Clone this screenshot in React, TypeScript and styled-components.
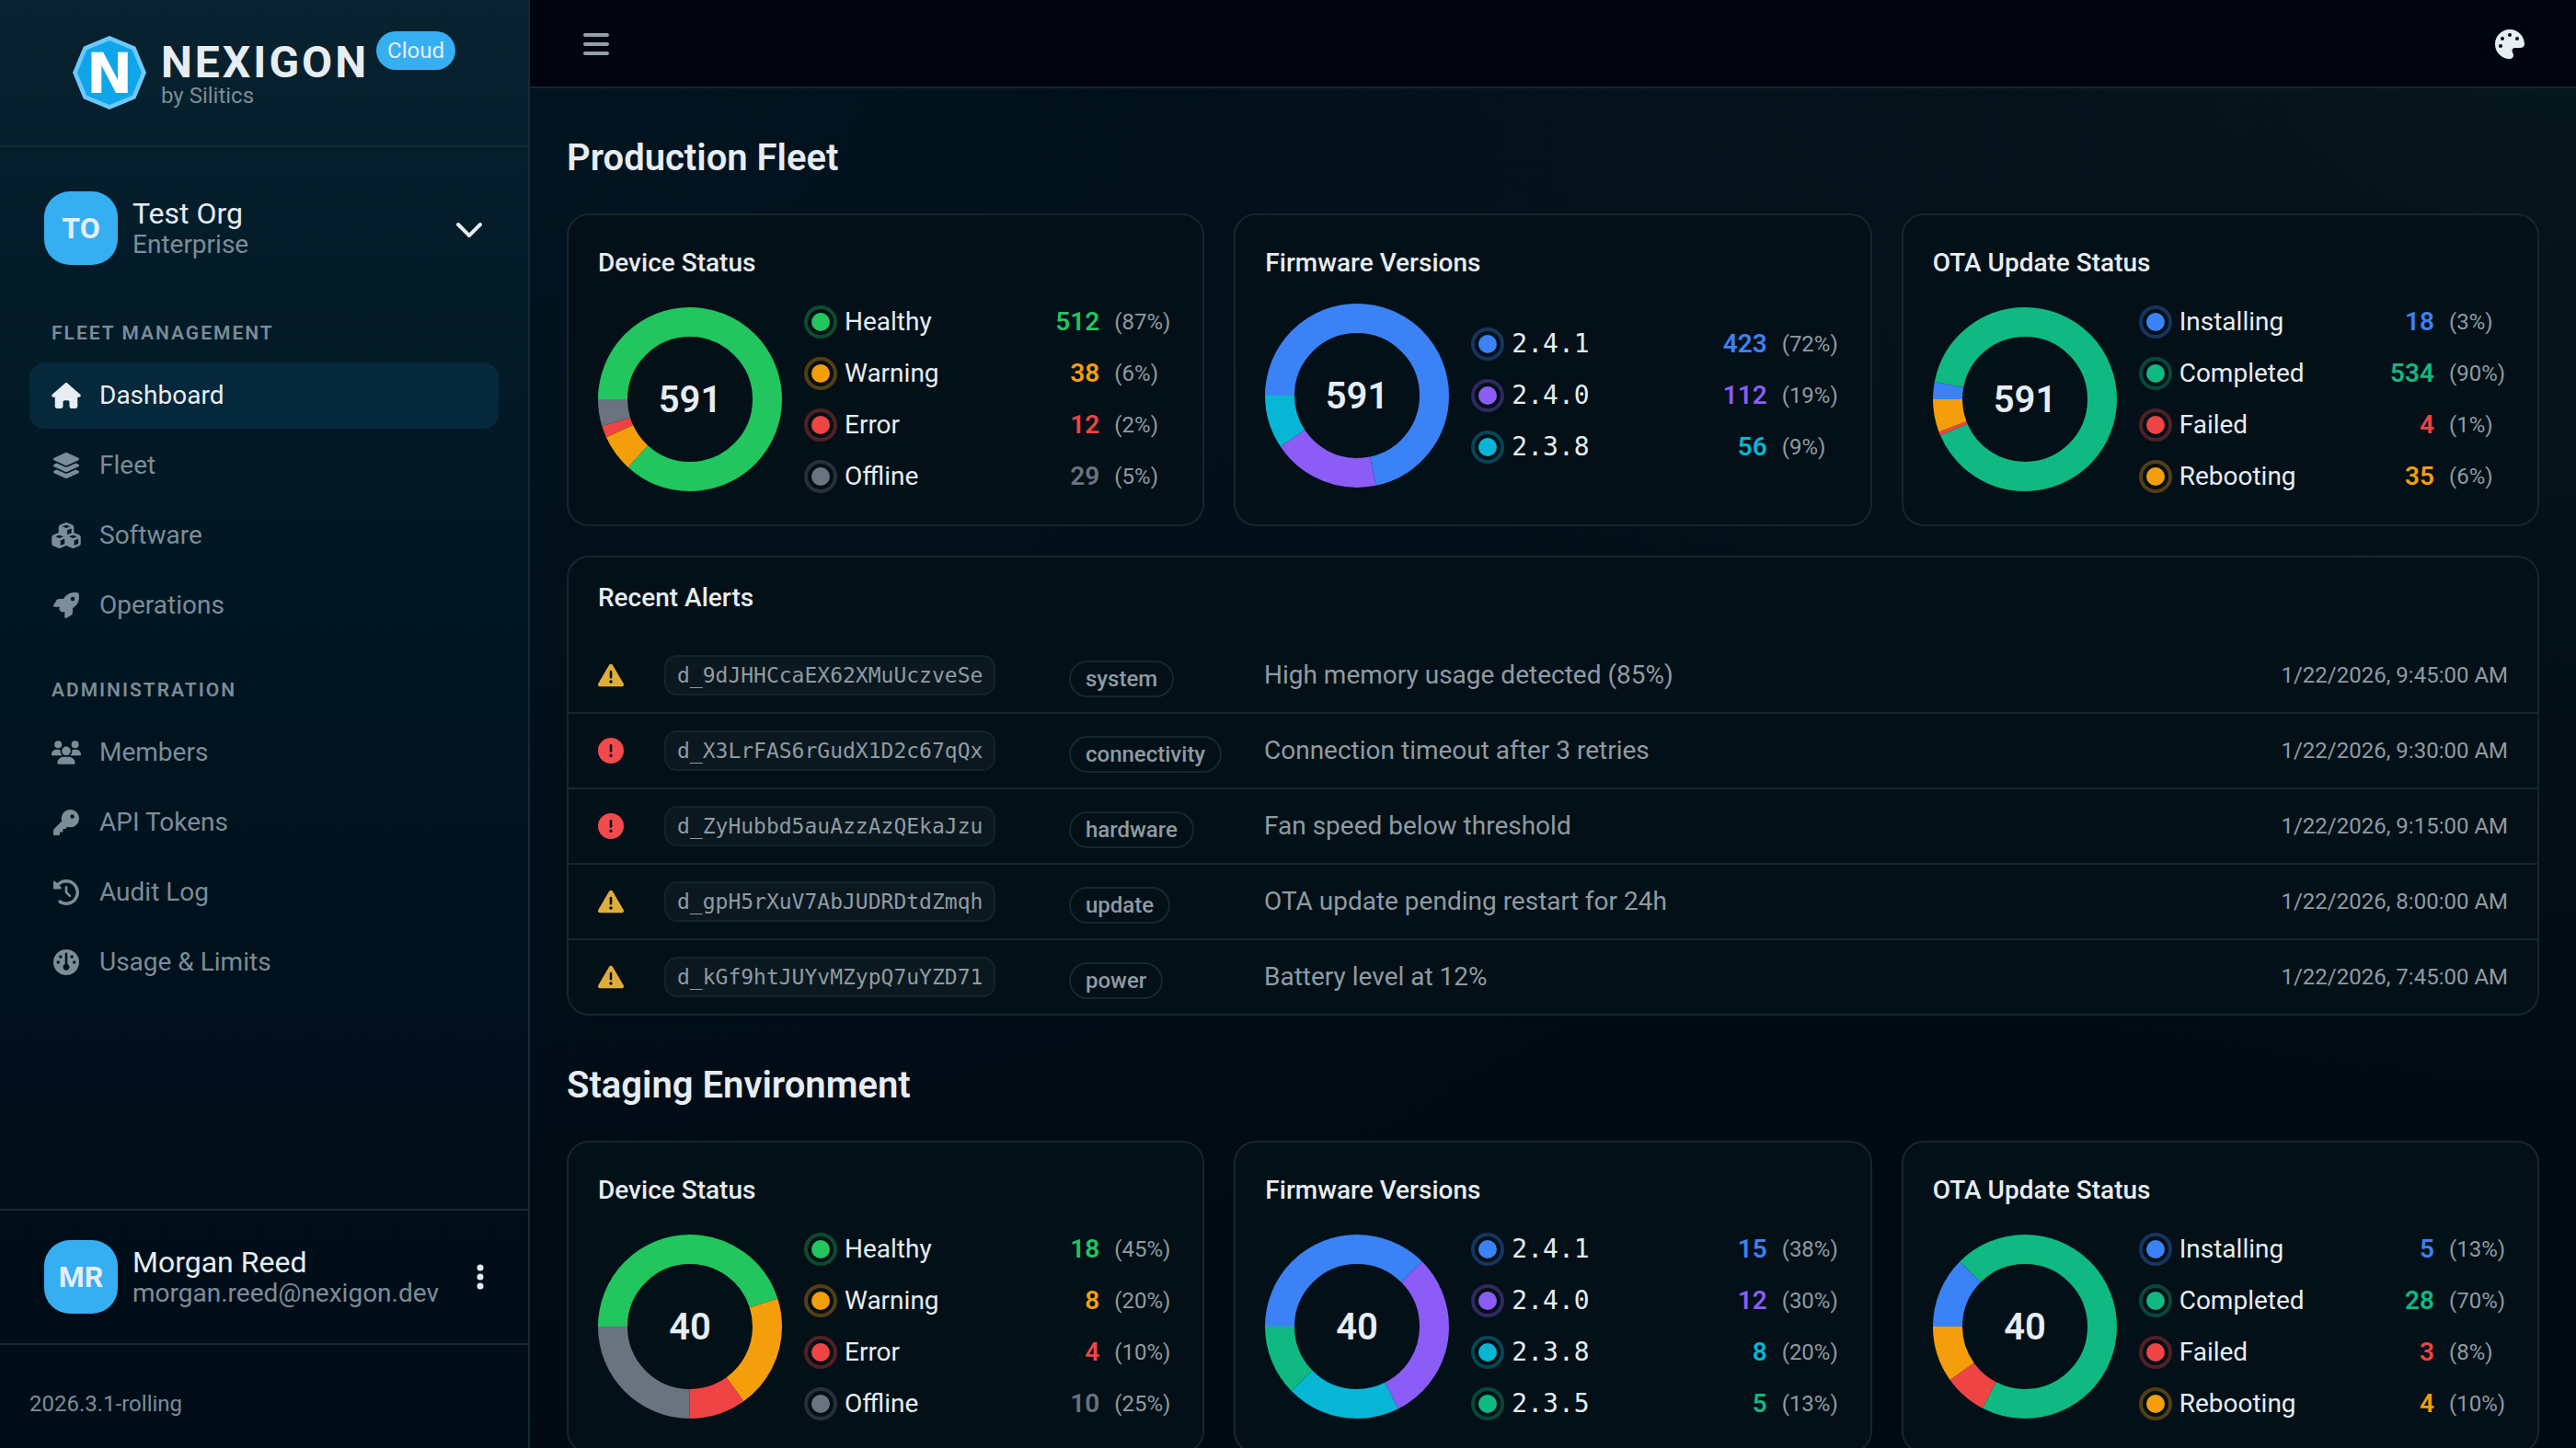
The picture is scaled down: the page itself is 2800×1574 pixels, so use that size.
import React from "react";
import styled, {createGlobalStyle, css} from "styled-components";
import {
    FaBars,
    FaChevronDown,
    FaCircleExclamation,
    FaClockRotateLeft,
    FaCubes,
    FaEllipsisVertical,
    FaGauge,
    FaHouse,
    FaKey,
    FaLayerGroup,
    FaPalette,
    FaRocket,
    FaTriangleExclamation,
    FaUsers
} from "react-icons/fa6";

const SANS = `Roboto, "Liberation Sans", sans-serif`;
const MONO = `"DejaVu Sans Mono", "Liberation Mono", monospace`;

const TEXT = "#e6edf3";
const MUTED = "#8f9ba3";
const FAINT = "#7b8d98";
const LINE = "#17262d";
const SIDE_LINE = "#132a36";
const ACCENT = "#36aff2";

const GlobalStyle = createGlobalStyle`
  * {
    box-sizing: border-box;
  }

  body {
    margin: 0;
    background: #010a13;
    color: ${TEXT};
    font-family: ${SANS};
    font-size: 28px;
    line-height: 40px;
  }

  button {
    padding: 0;
    border: 0;
    background: none;
    color: inherit;
    font: inherit;
    cursor: pointer;
  }
`;

const Layout = styled.div`
  display: grid;
  grid-template-columns: 576px 1fr;
  height: 100vh;
  overflow: hidden;
  background:
    radial-gradient(ellipse 60% 80% at 100% 0, rgba(10, 32, 38, 0.6), transparent),
    radial-gradient(ellipse 70% 100% at 20% 0, rgba(0, 28, 42, 0.6), transparent),
    #010a13;
`;

const Sidebar = styled.aside`
  display: flex;
  flex-direction: column;
  border-right: 2px solid ${SIDE_LINE};
  background: linear-gradient(180deg, #09222f 0%, #041c29 18%, #001521 45%, #000f1b 75%, #000c17 100%);
`;

const Brand = styled.a`
  display: flex;
  justify-content: center;
  align-items: center;
  gap: 16px;
  height: 160px;
  border-bottom: 2px solid ${SIDE_LINE};
  color: inherit;
  text-decoration: none;
`;

const BrandText = styled.span`
  display: flex;
  flex-direction: column;
  padding-top: 10px;

  small {
    color: ${FAINT};
    font-size: 24px;
    line-height: 32px;
  }
`;

const BrandName = styled.span`
  font-size: 48px;
  font-weight: 700;
  line-height: 40px;
  letter-spacing: 3px;
`;

const CloudBadge = styled.span`
  align-self: flex-start;
  margin: 34px 0 0 -8px;
  padding: 0 12px;
  border-radius: 21px;
  background: ${ACCENT};
  font-size: 24px;
  line-height: 42px;
`;

const Account = styled.button`
  display: flex;
  align-items: center;
  gap: 16px;
  width: 100%;
  padding: 32px 48px;
  text-align: left;

  svg {
    width: 8px;
    height: 32px;
    margin-left: auto;
  }
`;

const OrgSwitcher = styled(Account)`
  padding: 48px 48px 18px;

  svg {
    width: 32px;
  }
`;

const Avatar = styled.span`
  display: flex;
  flex-shrink: 0;
  justify-content: center;
  align-items: center;
  width: 80px;
  height: 80px;
  border-radius: 28px;
  background: ${ACCENT};
  font-size: 32px;
  font-weight: 700;
`;

const AccountName = styled.span`
  display: flex;
  flex-direction: column;
  padding-top: 2px;
  font-size: 32px;
  line-height: 34px;

  small {
    color: ${FAINT};
    font-size: 28px;
    line-height: 34px;
  }
`;

const NavGroup = styled.nav`
  display: flex;
  flex-direction: column;
  gap: 4px;
  padding: 0 32px;
`;

const NavTitle = styled.h2`
  margin: 0;
  padding: 40px 24px 12px;
  color: ${FAINT};
  font-size: 21px;
  font-weight: 600;
  line-height: 32px;
  letter-spacing: 2px;
`;

const NavLink = styled.a<{ $active?: boolean }>`
  display: flex;
  align-items: center;
  gap: 20px;
  height: 72px;
  padding: 0 24px;
  border-radius: 16px;
  color: ${({$active}) => $active ? TEXT : FAINT};
  text-decoration: none;
  ${({$active}) => $active && css`background: #05283b;`}

  svg {
    width: 32px;
    height: 28px;
  }
`;

const SidebarFooter = styled.div`
  margin-top: auto;
`;

const UserPanel = styled.div`
  border-top: 2px solid ${SIDE_LINE};
  border-bottom: 2px solid ${SIDE_LINE};
`;

const Version = styled.div`
  padding: 48px 32px 32px;
  color: ${FAINT};
  font-size: 24px;
  line-height: 32px;
`;

const Content = styled.div`
  display: flex;
  flex-direction: column;
  min-width: 0;
  min-height: 0;
`;

const TopBar = styled.header`
  display: flex;
  flex-shrink: 0;
  justify-content: space-between;
  align-items: center;
  height: 96px;
  padding: 2px 56px 0;
  border-bottom: 2px solid ${LINE};
  background: #00050f;
`;

const IconButton = styled.button<{ $dim?: boolean }>`
  display: flex;
  color: ${({$dim}) => $dim ? "#93a0a9" : TEXT};

  svg {
    width: 32px;
    height: 32px;
  }
`;

const Main = styled.main`
  flex: 1;
  padding: 0 40px 48px;
  overflow-y: auto;
  scrollbar-width: none;
`;

const SectionTitle = styled.h1`
  margin: 48px 0 32px;
  font-size: 40px;
  font-weight: 600;
  line-height: 56px;
`;

const CardGrid = styled.div`
  display: grid;
  grid-template-columns: repeat(3, minmax(0, 1fr));
  gap: 32px;
`;

const Card = styled.section`
  border: 2px solid ${LINE};
  border-radius: 24px;
  background: #031017;
`;

const StatCard = styled(Card)`
  padding: 32px;
`;

const CardTitle = styled.h3`
  margin: 0;
  font-size: 28px;
  font-weight: 500;
  line-height: 40px;
`;

const CardBody = styled.div`
  display: flex;
  align-items: center;
  gap: 24px;
  margin-top: 24px;
`;

const Chart = styled.svg`
  flex-shrink: 0;
  width: 200px;
  height: 200px;

  text {
    fill: ${TEXT};
    font-size: 40px;
    font-weight: 600;
  }
`;

const Legend = styled.ul`
  display: flex;
  flex: 1;
  flex-direction: column;
  gap: 16px;
  margin: 0;
  padding: 0;
  list-style: none;
`;

const LegendRow = styled.li`
  display: grid;
  grid-template-columns: 36px 1fr auto 64px;
  align-items: center;
  height: 40px;
`;

const LegendLabel = styled.span<{ $mono?: boolean }>`
  padding-left: 8px;
  font-family: ${({$mono}) => $mono ? MONO : "inherit"};
`;

const LegendValue = styled.strong<{ $color: string }>`
  padding-right: 16px;
  color: ${({$color}) => $color};
  font-weight: 600;
`;

const LegendPercent = styled.span`
  color: ${MUTED};
  font-size: 24px;
`;

const AlertsCard = styled(Card)`
  margin-top: 32px;
`;

const AlertsTitle = styled(CardTitle)`
  padding: 24px 32px;
`;

const AlertsTable = styled.table`
  width: 100%;
  border-collapse: separate;
  border-spacing: 0;
  table-layout: fixed;
  color: ${MUTED};
`;

const AlertCell = styled.td<{ $width?: number }>`
  width: ${({$width}) => $width ? `${$width}px` : "auto"};
  height: 82px;
  padding: 0 16px;
  white-space: nowrap;

  &:first-of-type {
    padding-left: 32px;
  }

  &:last-of-type {
    padding-right: 32px;
    font-size: 24px;
    text-align: right;
  }

  tr:not(:last-of-type) > & {
    border-bottom: 2px solid ${LINE};
  }

  tr:last-of-type > & {
    height: 80px;
  }
`;

const AlertIcon = styled.span<{ $level: Level }>`
  display: flex;
  color: ${({$level}) => $level === "warning" ? "#dfae3a" : "#f24a4d"};
`;

const DeviceId = styled.code`
  display: inline-block;
  padding: 0 12px;
  border: 2px solid #14232b;
  border-radius: 14px;
  background: #0b181f;
  font-family: ${MONO};
  font-size: 23px;
  line-height: 40px;
  vertical-align: middle;
`;

const Tag = styled.span`
  display: inline-block;
  margin-top: 8px;
  padding: 0 16px;
  border: 2px solid #18272f;
  border-radius: 20px;
  font-size: 24px;
  font-weight: 500;
  line-height: 36px;
  vertical-align: middle;
`;

type Level = "warning" | "error"

type Stat = { label: string, value: number, percent: number, color: string }

type StatGroup = { title: string, total: number, mono?: boolean, stats: Stat[] }

const stat = (label: string, value: number, percent: number, color: string): Stat => ({label, value, percent, color});

const GREEN = "#22c55e";
const AMBER = "#f59e0b";
const RED = "#ef4444";
const GRAY = "#6b7280";
const BLUE = "#3b82f6";
const VIOLET = "#8b5cf6";
const CYAN = "#06b6d4";
const EMERALD = "#10b981";

const production: StatGroup[] = [
    {
        title: "Device Status", total: 591, stats: [
            stat("Healthy", 512, 87, GREEN),
            stat("Warning", 38, 6, AMBER),
            stat("Error", 12, 2, RED),
            stat("Offline", 29, 5, GRAY)
        ]
    },
    {
        title: "Firmware Versions", total: 591, mono: true, stats: [
            stat("2.4.1", 423, 72, BLUE),
            stat("2.4.0", 112, 19, VIOLET),
            stat("2.3.8", 56, 9, CYAN)
        ]
    },
    {
        title: "OTA Update Status", total: 591, stats: [
            stat("Installing", 18, 3, BLUE),
            stat("Completed", 534, 90, EMERALD),
            stat("Failed", 4, 1, RED),
            stat("Rebooting", 35, 6, AMBER)
        ]
    }
];

const staging: StatGroup[] = [
    {
        title: "Device Status", total: 40, stats: [
            stat("Healthy", 18, 45, GREEN),
            stat("Warning", 8, 20, AMBER),
            stat("Error", 4, 10, RED),
            stat("Offline", 10, 25, GRAY)
        ]
    },
    {
        title: "Firmware Versions", total: 40, mono: true, stats: [
            stat("2.4.1", 15, 38, BLUE),
            stat("2.4.0", 12, 30, VIOLET),
            stat("2.3.8", 8, 20, CYAN),
            stat("2.3.5", 5, 13, EMERALD)
        ]
    },
    {
        title: "OTA Update Status", total: 40, stats: [
            stat("Installing", 5, 13, BLUE),
            stat("Completed", 28, 70, EMERALD),
            stat("Failed", 3, 8, RED),
            stat("Rebooting", 4, 10, AMBER)
        ]
    }
];

const alerts: { level: Level, device: string, tag: string, message: string, time: string }[] = [
    {level: "warning", device: "d_9dJHHCcaEX62XMuUczveSe", tag: "system", message: "High memory usage detected (85%)", time: "1/22/2026, 9:45:00 AM"},
    {level: "error", device: "d_X3LrFAS6rGudX1D2c67qQx", tag: "connectivity", message: "Connection timeout after 3 retries", time: "1/22/2026, 9:30:00 AM"},
    {level: "error", device: "d_ZyHubbd5auAzzAzQEkaJzu", tag: "hardware", message: "Fan speed below threshold", time: "1/22/2026, 9:15:00 AM"},
    {level: "warning", device: "d_gpH5rXuV7AbJUDRDtdZmqh", tag: "update", message: "OTA update pending restart for 24h", time: "1/22/2026, 8:00:00 AM"},
    {level: "warning", device: "d_kGf9htJUYvMZypQ7uYZD71", tag: "power", message: "Battery level at 12%", time: "1/22/2026, 7:45:00 AM"}
];

const navigation = [
    {
        title: "FLEET MANAGEMENT",
        links: [
            {label: "Dashboard", icon: <FaHouse/>},
            {label: "Fleet", icon: <FaLayerGroup/>},
            {label: "Software", icon: <FaCubes/>},
            {label: "Operations", icon: <FaRocket/>}
        ]
    },
    {
        title: "ADMINISTRATION",
        links: [
            {label: "Members", icon: <FaUsers/>},
            {label: "API Tokens", icon: <FaKey/>},
            {label: "Audit Log", icon: <FaClockRotateLeft/>},
            {label: "Usage & Limits", icon: <FaGauge/>}
        ]
    }
];

const Logo: React.FC = () => (
    <svg width="80" height="80" viewBox="0 0 80 80" aria-hidden="true">
        <polygon points="40,0 68.3,11.7 80,40 68.3,68.3 40,80 11.7,68.3 0,40 11.7,11.7" fill="#6cc9fb"/>
        <polygon points="40,5 64.8,15.2 75,40 64.8,64.8 40,75 15.2,64.8 5,40 15.2,15.2" fill="#10a5e9"/>
        <text
            x="40"
            y="62"
            fill="#fff"
            fontFamily="DejaVu Sans, sans-serif"
            fontSize="60"
            fontWeight="700"
            textAnchor="middle"
        >N</text>
    </svg>
);

const RADIUS = 84;
const LENGTH = 2 * Math.PI * RADIUS;

const Donut: React.FC<{ total: number, stats: Stat[] }> = ({total, stats}) => {
    let passed = 0;
    return (
        <Chart viewBox="0 0 200 200">
            <g transform="rotate(180 100 100)" fill="none" strokeWidth="32">
                {
                    stats.map(({label, value, color}) => {
                        const start = passed;
                        passed += value;
                        return (
                            <circle
                                key={label}
                                cx="100"
                                cy="100"
                                r={RADIUS}
                                stroke={color}
                                strokeDasharray={`${value / total * LENGTH} ${LENGTH}`}
                                strokeDashoffset={-start / total * LENGTH}
                            />
                        )
                    })
                }
            </g>
            <text x="100" y="114" textAnchor="middle">{total}</text>
        </Chart>
    )
};

const Marker: React.FC<{ color: string }> = ({color}) => (
    <svg width="36" height="36" viewBox="0 0 36 36" aria-hidden="true">
        <circle cx="18" cy="18" r="16" fill="none" stroke={color} strokeWidth="4" opacity="0.33"/>
        <circle cx="18" cy="18" r="10" fill={color}/>
    </svg>
);

const StatCards: React.FC<{ groups: StatGroup[] }> = ({groups}) => (
    <CardGrid>
        {
            groups.map(({title, total, mono, stats}) =>
                <StatCard key={title}>
                    <CardTitle>{title}</CardTitle>
                    <CardBody>
                        <Donut total={total} stats={stats}/>
                        <Legend>
                            {
                                stats.map(({label, value, percent, color}) =>
                                    <LegendRow key={label}>
                                        <Marker color={color}/>
                                        <LegendLabel $mono={mono}>{label}</LegendLabel>
                                        <LegendValue $color={color}>{value}</LegendValue>
                                        <LegendPercent>({percent}%)</LegendPercent>
                                    </LegendRow>
                                )
                            }
                        </Legend>
                    </CardBody>
                </StatCard>
            )
        }
    </CardGrid>
);

const RecentAlerts: React.FC = () => (
    <AlertsCard>
        <AlertsTitle>Recent Alerts</AlertsTitle>
        <AlertsTable>
            <tbody>
            {
                alerts.map(({level, device, tag, message, time}) =>
                    <tr key={device}>
                        <AlertCell $width={88}>
                            <AlertIcon $level={level}>
                                {level === "warning" ? <FaTriangleExclamation/> : <FaCircleExclamation/>}
                            </AlertIcon>
                        </AlertCell>
                        <AlertCell $width={440}><DeviceId>{device}</DeviceId></AlertCell>
                        <AlertCell $width={212}><Tag>{tag}</Tag></AlertCell>
                        <AlertCell>{message}</AlertCell>
                        <AlertCell $width={320}>{time}</AlertCell>
                    </tr>
                )
            }
            </tbody>
        </AlertsTable>
    </AlertsCard>
);

const App: React.FC = () => (
    <>
        <GlobalStyle/>
        <Layout>
            <Sidebar>
                <Brand href="#">
                    <Logo/>
                    <BrandText>
                        <BrandName>NEXIGON</BrandName>
                        <small>by Silitics</small>
                    </BrandText>
                    <CloudBadge>Cloud</CloudBadge>
                </Brand>
                <OrgSwitcher type="button">
                    <Avatar>TO</Avatar>
                    <AccountName>
                        Test Org
                        <small>Enterprise</small>
                    </AccountName>
                    <FaChevronDown/>
                </OrgSwitcher>
                {
                    navigation.map(({title, links}) =>
                        <NavGroup key={title} aria-label={title}>
                            <NavTitle>{title}</NavTitle>
                            {
                                links.map(({label, icon}) =>
                                    <NavLink key={label} href="#" $active={label === "Dashboard"}>
                                        {icon}
                                        {label}
                                    </NavLink>
                                )
                            }
                        </NavGroup>
                    )
                }
                <SidebarFooter>
                    <UserPanel>
                        <Account type="button">
                            <Avatar>MR</Avatar>
                            <AccountName>
                                Morgan Reed
                                <small>morgan.reed@nexigon.dev</small>
                            </AccountName>
                            <FaEllipsisVertical/>
                        </Account>
                    </UserPanel>
                    <Version>2026.3.1-rolling</Version>
                </SidebarFooter>
            </Sidebar>
            <Content>
                <TopBar>
                    <IconButton type="button" aria-label="Toggle sidebar" $dim><FaBars/></IconButton>
                    <IconButton type="button" aria-label="Theme"><FaPalette/></IconButton>
                </TopBar>
                <Main>
                    <SectionTitle>Production Fleet</SectionTitle>
                    <StatCards groups={production}/>
                    <RecentAlerts/>
                    <SectionTitle>Staging Environment</SectionTitle>
                    <StatCards groups={staging}/>
                </Main>
            </Content>
        </Layout>
    </>
);

export default App;
